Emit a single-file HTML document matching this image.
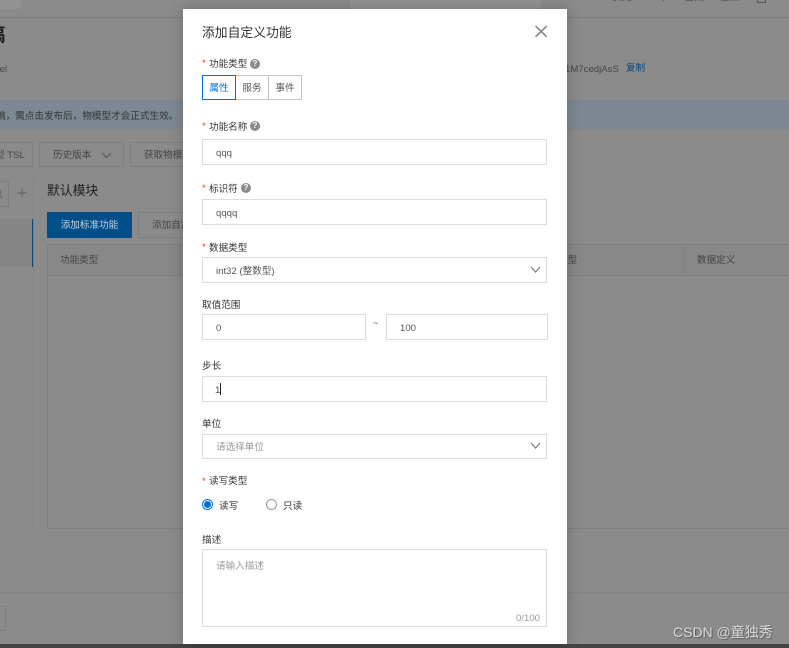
<!DOCTYPE html>
<html lang="zh-CN">
<head>
<meta charset="utf-8">
<title>添加自定义功能</title>
<style>
html,body{margin:0;padding:0;width:789px;height:648px;overflow:hidden;background:#8b8b8b}
body{position:relative;font-family:"Liberation Sans","Noto Sans CJK SC",sans-serif;font-size:9.6px;color:#333}
div,span{position:absolute;box-sizing:border-box;white-space:nowrap}
.t{line-height:14px;height:14px}
.bg{color:#3a3a3a;margin-top:2px}
.ln{background:#7f7f7f}
.box{border:1px solid #7f7f7f}
#modal{left:183px;top:9px;width:384px;height:635px;background:#fff;box-shadow:0 0 14px rgba(0,0,0,.22)}
.lab{color:#333;margin-top:2px}
.star{color:#f33;font-size:9.6px}
.inp{height:26px;left:202px;width:345px;border:1px solid #dcdcdc;background:#fff}
.help{width:10px;height:10px;border-radius:50%;background:#8a8a8a;color:#fff;font-size:8px;font-weight:bold;line-height:10px;text-align:center}
.val{color:#555;margin-top:1px}
.ph{color:#999}
</style>
</head>
<body>
<!-- background page -->
<div style="left:0;top:17px;width:789px;height:1px;background:#7d7d7d"></div>
<div style="left:0;top:0;width:21px;height:9px;background:#929292"></div>
<div style="left:350px;top:0;width:191px;height:9px;background:#949494"></div>
<div class="t" style="left:613px;top:-9px;word-spacing:14px;color:#3a3a3a">费用 工单 备案 企业</div>
<div style="left:757px;top:0;width:9px;height:3px;border:1px solid #555;border-top:0"></div>

<div style="left:-14px;top:23px;font-size:19.2px;line-height:26px;font-weight:bold;color:#1c1c1c">稿</div>
<div class="t bg" style="left:-19px;top:61px;color:#444">Model</div>
<div class="t bg" style="left:565px;top:61px;color:#444">1M7cedjAsS</div>
<div class="t" style="left:626px;top:62px;color:#00497f">复制</div>

<div style="left:0;top:100px;width:789px;height:29px;background:#7e8892"></div>
<div class="t bg" style="left:-4px;top:108px;color:#333">稿，需点击发布后，物模型才会正式生效。</div>

<div class="box" style="left:-40px;top:142px;width:73px;height:25px"></div>
<div class="t bg" style="left:-5px;top:147px;color:#444">型 TSL</div>
<div class="box" style="left:39px;top:142px;width:85px;height:25px"></div>
<div class="t bg" style="left:53px;top:147px;color:#444">历史版本</div>
<svg style="position:absolute;left:101px;top:151px" width="12" height="9" viewBox="0 0 12 9"><path d="M1 2 L5.5 6.5 L10 2" fill="none" stroke="#555" stroke-width="1"/></svg>
<div class="box" style="left:130px;top:142px;width:90px;height:25px"></div>
<div class="t bg" style="left:144px;top:147px;color:#444">获取物模型</div>

<div class="box" style="left:-40px;top:181px;width:49px;height:26px"></div>
<svg style="position:absolute;left:-7px;top:187px" width="12" height="13" viewBox="0 0 12 13"><circle cx="4" cy="5" r="3.6" fill="none" stroke="#666"/><path d="M6.8 8 L9.5 11" stroke="#666"/></svg>
<svg style="position:absolute;left:17px;top:188px" width="10" height="10" viewBox="0 0 10 10"><path d="M5 0.5 V9.5 M0.5 5 H9.5" stroke="#666" stroke-width="1.2"/></svg>
<div style="left:33px;top:180px;width:1px;height:349px;background:#828282"></div>
<div style="left:0;top:219px;width:33px;height:48px;background:#868686"></div>
<div style="left:32px;top:219px;width:1px;height:48px;background:#00497f"></div>

<div style="left:47px;top:182px;font-size:12.8px;line-height:18px;color:#1e1e1e">默认模块</div>
<div style="left:47px;top:212px;width:85px;height:26px;background:#004f8b;color:#c6d3de;line-height:28px;text-align:center">添加标准功能</div>
<div class="box" style="left:138px;top:212px;width:90px;height:26px;line-height:26px;padding-left:13px;color:#444">添加自定义功能</div>

<div style="left:47px;top:244px;width:742px;height:285px;border:1px solid #7f7f7f;border-right:0"></div>
<div style="left:47px;top:275px;width:742px;height:1px;background:#7f7f7f"></div>
<div style="left:48px;top:245px;width:741px;height:30px;background:#888"></div>
<div style="left:180px;top:245px;width:1px;height:30px;background:#7f7f7f"></div>
<div style="left:684px;top:245px;width:1px;height:30px;background:#7f7f7f"></div>
<div class="t bg" style="left:60px;top:252px;color:#444">功能类型</div>
<div class="t bg" style="left:558px;top:252px;color:#444">类型</div>
<div class="t bg" style="left:697px;top:252px;color:#444">数据定义</div>

<div style="left:0;top:592px;width:789px;height:1px;background:#848484"></div>
<div class="box" style="left:-40px;top:606px;width:46px;height:25px"></div>
<div style="left:0;top:644px;width:789px;height:4px;background:#444"></div>

<!-- modal -->
<div id="modal"></div>
<div style="left:202px;top:24px;font-size:12.8px;line-height:18px;color:#333">添加自定义功能</div>
<svg style="position:absolute;left:534px;top:25px" width="14" height="13" viewBox="0 0 14 13"><path d="M1.5 1 L12.8 11.8 M12.8 1 L1.5 11.8" stroke="#808080" stroke-width="1.5" fill="none"/></svg>

<div class="t star" style="left:202px;top:57px">*</div>
<div class="t lab" style="left:209px;top:56px">功能类型</div>
<div class="help" style="left:250px;top:59px">?</div>

<div style="left:202px;top:75px;width:34px;height:25px;border:1px solid #0070cc;color:#0070cc;line-height:26px;text-align:center;z-index:2">属性</div>
<div style="left:235px;top:75px;width:34px;height:25px;border:1px solid #c4c4c4;line-height:26px;text-align:center;color:#555">服务</div>
<div style="left:268px;top:75px;width:34px;height:25px;border:1px solid #c4c4c4;line-height:26px;text-align:center;color:#555">事件</div>

<div class="t star" style="left:202px;top:120px">*</div>
<div class="t lab" style="left:209px;top:119px">功能名称</div>
<div class="help" style="left:250px;top:121px">?</div>
<div class="inp" style="top:139px"></div>
<div class="t val" style="left:216px;top:146px">qqq</div>

<div class="t star" style="left:202px;top:182px">*</div>
<div class="t lab" style="left:209px;top:181px">标识符</div>
<div class="help" style="left:241px;top:183px">?</div>
<div class="inp" style="top:199px"></div>
<div class="t val" style="left:216px;top:206px">qqqq</div>

<div class="t star" style="left:202px;top:241px">*</div>
<div class="t lab" style="left:209px;top:240px">数据类型</div>
<div class="inp" style="top:257px"></div>
<div class="t val" style="left:216px;top:264px">int32 (整数型)</div>
<svg style="position:absolute;left:530px;top:266px" width="11" height="7" viewBox="0 0 11 7"><path d="M1 1 L5.5 6 L10 1" fill="none" stroke="#777" stroke-width="1.1"/></svg>

<div class="t lab" style="left:202px;top:297px">取值范围</div>
<div class="inp" style="top:314px;width:164px"></div>
<div class="t val" style="left:216px;top:321px">0</div>
<div class="t val" style="left:373px;top:316px">~</div>
<div class="inp" style="top:314px;left:386px;width:162px"></div>
<div class="t val" style="left:400px;top:321px">100</div>

<div class="t lab" style="left:202px;top:358px">步长</div>
<div class="inp" style="top:376px"></div>
<div class="t val" style="left:215px;top:383px">1</div>
<div style="left:220px;top:383px;width:1px;height:12px;background:#222"></div>

<div class="t lab" style="left:202px;top:416px">单位</div>
<div class="inp" style="top:434px;height:25px"></div>
<div class="t ph" style="left:216px;top:441px">请选择单位</div>
<svg style="position:absolute;left:530px;top:442px" width="11" height="7" viewBox="0 0 11 7"><path d="M1 1 L5.5 6 L10 1" fill="none" stroke="#777" stroke-width="1.1"/></svg>

<div class="t star" style="left:202px;top:475px">*</div>
<div class="t" style="left:209px;top:475px;color:#333">读写类型</div>

<div style="left:202px;top:499px;width:11px;height:11px;border-radius:50%;border:1px solid #0070cc;background:#fff"></div>
<div style="left:204px;top:501px;width:7px;height:7px;border-radius:50%;background:#0070cc"></div>
<div class="t lab" style="left:219px;top:498px">读写</div>
<div style="left:266px;top:499px;width:11px;height:11px;border-radius:50%;border:1px solid #999;background:#fff"></div>
<div class="t lab" style="left:283px;top:498px">只读</div>

<div class="t lab" style="left:202px;top:532px">描述</div>
<div class="inp" style="top:549px;height:78px"></div>
<div class="t ph" style="left:216px;top:560px">请输入描述</div>
<div class="t ph" style="left:516px;top:612px">0/100</div>

<div style="left:673px;top:623px;font-size:14px;line-height:18px;color:#dcdcdc;text-shadow:1px 1px 1px #555">CSDN @童独秀</div>
</body>
</html>
